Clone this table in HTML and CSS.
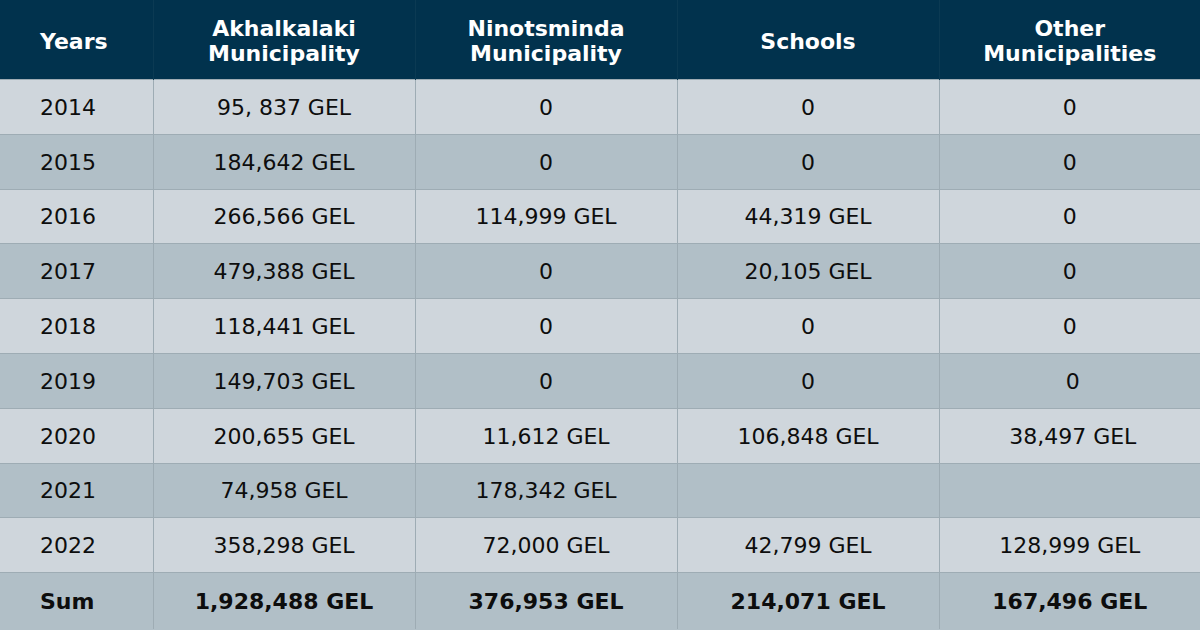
FILE: index.html
```html
<!DOCTYPE html>
<html>
<head>
<meta charset="utf-8">
<link rel="stylesheet" href="styles.css">
</head>
<body>
<table class="grid">
  <colgroup>
    <col class="c-year"><col class="c-mid"><col class="c-mid"><col class="c-mid"><col class="c-last">
  </colgroup>
  <thead>
    <tr>
      <th class="year">Years</th>
      <th>Akhalkalaki<br>Municipality</th>
      <th>Ninotsminda<br>Municipality</th>
      <th>Schools</th>
      <th>Other<br>Municipalities</th>
    </tr>
  </thead>
  <tbody>
    <tr class="light"><td class="year">2014</td><td>95, 837 GEL</td><td>0</td><td>0</td><td>0</td></tr>
    <tr class="dark"><td class="year">2015</td><td>184,642 GEL</td><td>0</td><td>0</td><td>0</td></tr>
    <tr class="light"><td class="year">2016</td><td>266,566 GEL</td><td>114,999 GEL</td><td>44,319 GEL</td><td>0</td></tr>
    <tr class="dark"><td class="year">2017</td><td>479,388 GEL</td><td>0</td><td>20,105 GEL</td><td>0</td></tr>
    <tr class="light"><td class="year">2018</td><td>118,441 GEL</td><td>0</td><td>0</td><td>0</td></tr>
    <tr class="dark"><td class="year">2019</td><td>149,703 GEL</td><td>0</td><td>0</td><td class="nudge">0</td></tr>
    <tr class="light"><td class="year">2020</td><td>200,655 GEL</td><td>11,612 GEL</td><td>106,848 GEL</td><td class="nudge">38,497 GEL</td></tr>
    <tr class="dark"><td class="year">2021</td><td>74,958 GEL</td><td>178,342 GEL</td><td></td><td></td></tr>
    <tr class="light"><td class="year">2022</td><td>358,298 GEL</td><td>72,000 GEL</td><td>42,799 GEL</td><td>128,999 GEL</td></tr>
    <tr class="dark sum"><td class="year">Sum</td><td>1,928,488 GEL</td><td>376,953 GEL</td><td>214,071 GEL</td><td>167,496 GEL</td></tr>
  </tbody>
</table>
</body>
</html>
```

FILE: styles.css
```css
html, body {
  margin: 0;
  padding: 0;
  width: 1200px;
  height: 630px;
  overflow: hidden;
  background: #b1bfc7;
}

.grid {
  width: 1200px;
  border-collapse: collapse;
  table-layout: fixed;
  font-family: "DejaVu Sans", Verdana, sans-serif;
  color: #0d0d0d;
}

.c-year { width: 153px; }
.c-mid { width: 262px; }
.c-last { width: 261px; }

.grid th {
  background: #01324d;
  color: #ffffff;
  font-size: 22px;
  font-weight: bold;
  line-height: 25px;
  height: 76px;
  padding: 3px 0 0 0;
  text-align: center;
  vertical-align: middle;
  border-left: 1px solid #0b3a53;
}

.grid th:first-child { border-left: none; }

.grid td {
  font-size: 22px;
  height: 52.8px;
  padding: 1px 0 0 0;
  text-align: center;
  vertical-align: middle;
  border-top: 1px solid #9eacb4;
  border-left: 1px solid #9eacb4;
}

.grid td:first-child { border-left: none; }

.grid .year {
  text-align: left;
  padding-left: 40px;
}

.light td { background: #cfd6dc; }
.dark td { background: #b1bfc7; }

.sum td {
  font-weight: bold;
  height: 55px;
}

.nudge { padding-left: 6px !important; }
```
